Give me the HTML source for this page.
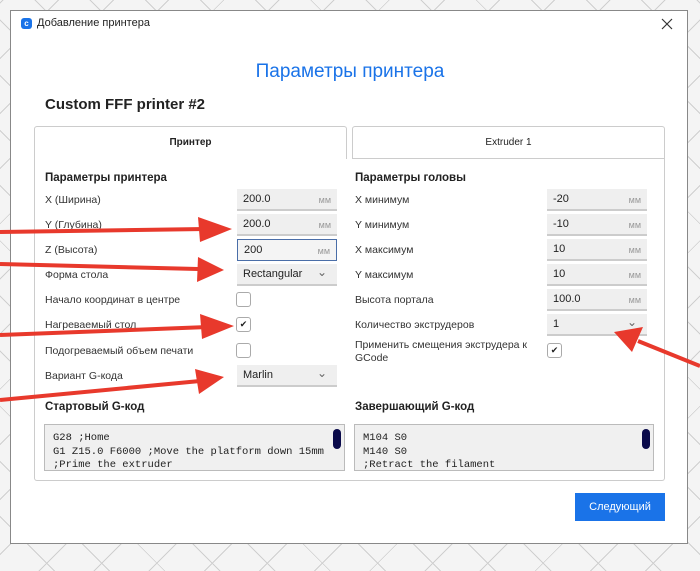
<!DOCTYPE html>
<html><head><meta charset="utf-8"><style>
*{box-sizing:border-box;margin:0;padding:0}
body{width:700px;height:571px;overflow:hidden;position:relative;font-family:"Liberation Sans","DejaVu Sans",sans-serif;font-size:10.5px;color:#222;
background-color:#f4f4f4;
background-image:repeating-linear-gradient(45deg,transparent 0 38px,#cfcfcf 38px 39px),repeating-linear-gradient(-45deg,transparent 0 38px,#cfcfcf 38px 39px);}
.dlg{position:absolute;left:10px;top:10px;width:678px;height:534px;background:#fff;border:1px solid #888;}
.abs{position:absolute}
.lbl{position:absolute;font-size:10.5px;color:#333}
.inp{position:absolute;width:100px;height:22px;background:#efefef;border-bottom:2px solid #ccc;font-size:11px;padding:4px 0 0 6px;color:#222}
.inp .u{position:absolute;right:6px;top:6px;font-size:9px;color:#999}
.inp .c{position:absolute;right:10px;top:1px;font-size:12px;color:#666}
.cb{position:absolute;width:15px;height:15px;border:1px solid #aaa;border-radius:3px;background:#fff;font-size:9px;text-align:center;line-height:13px}
.h{position:absolute;font-weight:bold;font-size:11.5px;color:#222}
.code{position:absolute;height:47px;background:#f0f0f0;border:1px solid #bbb;font-family:"Liberation Mono",monospace;font-size:10.5px;line-height:13.5px;padding:7px 0 0 8px;overflow:hidden;white-space:pre;color:#222}
.sb{position:absolute;right:3px;top:4px;width:8px;height:20px;border-radius:4px;background:#0a0a4a}
</style></head><body>
<div class="dlg">
 <div class="abs" style="left:10px;top:7px;width:11px;height:11px;background:#1a73e8;border-radius:3px;color:#fff;font-size:8px;line-height:11px;text-align:center;font-weight:bold">c</div>
 <div class="abs" style="left:26px;top:6px;font-size:11px;color:#222">Добавление принтера</div>
 <svg class="abs" style="left:650px;top:7px" width="12" height="12"><path d="M1 1L11 11M11 1L1 11" stroke="#333" stroke-width="1.2"/></svg>
</div>
<div class="abs" style="left:0;top:61px;width:700px;text-align:center;font-size:19px;color:#1a73e8">Параметры принтера</div>
<div class="abs" style="left:45px;top:96px;font-size:15px;font-weight:bold;color:#222">Custom FFF printer #2</div>
<div class="abs" style="left:34px;top:158px;width:631px;height:323px;border:1px solid #ccc;border-top:none;border-radius:0 0 3px 3px"></div>
<div class="abs" style="left:352px;top:158px;width:313px;height:1px;background:#ccc"></div>
<div class="abs" style="left:34px;top:126px;width:313px;height:33px;border:1px solid #ccc;border-bottom:none;border-radius:3px 3px 0 0;background:#fff;text-align:center;line-height:32px;font-size:10px;font-weight:bold">Принтер</div>
<div class="abs" style="left:352px;top:126px;width:313px;height:32px;border:1px solid #ccc;border-bottom:none;border-radius:3px 3px 0 0;background:#fff;text-align:center;line-height:32px;font-size:10px">Extruder 1</div>

<div class="h" style="left:45px;top:172px">Параметры принтера</div>
<div class="lbl" style="left:45px;top:194px">X (Ширина)</div><div class="inp" style="left:237px;top:189px">200.0<span class="u">мм</span></div>
<div class="lbl" style="left:45px;top:219px">Y (Глубина)</div><div class="inp" style="left:237px;top:214px">200.0<span class="u">мм</span></div>
<div class="lbl" style="left:45px;top:244px">Z (Высота)</div><div class="inp" style="left:237px;top:239px;border:1px solid #4a6ea8;background:#f4f4f4">200<span class="u">мм</span></div>
<div class="lbl" style="left:45px;top:269px">Форма стола</div><div class="inp" style="left:237px;top:264px">Rectangular<span class="c">⌄</span></div>
<div class="lbl" style="left:45px;top:294px">Начало координат в центре</div><div class="cb" style="left:236px;top:292px"></div>
<div class="lbl" style="left:45px;top:319px">Нагреваемый стол</div><div class="cb" style="left:236px;top:317px">✔</div>
<div class="lbl" style="left:45px;top:345px">Подогреваемый объем печати</div><div class="cb" style="left:236px;top:343px"></div>
<div class="lbl" style="left:45px;top:370px">Вариант G-кода</div><div class="inp" style="left:237px;top:365px">Marlin<span class="c">⌄</span></div>

<div class="h" style="left:355px;top:172px">Параметры головы</div>
<div class="lbl" style="left:355px;top:194px">X минимум</div><div class="inp" style="left:547px;top:189px">-20<span class="u">мм</span></div>
<div class="lbl" style="left:355px;top:219px">Y минимум</div><div class="inp" style="left:547px;top:214px">-10<span class="u">мм</span></div>
<div class="lbl" style="left:355px;top:244px">X максимум</div><div class="inp" style="left:547px;top:239px">10<span class="u">мм</span></div>
<div class="lbl" style="left:355px;top:269px">Y максимум</div><div class="inp" style="left:547px;top:264px">10<span class="u">мм</span></div>
<div class="lbl" style="left:355px;top:294px">Высота портала</div><div class="inp" style="left:547px;top:289px">100.0<span class="u">мм</span></div>
<div class="lbl" style="left:355px;top:319px">Количество экструдеров</div><div class="inp" style="left:547px;top:314px">1<span class="c">⌄</span></div>
<div class="lbl" style="left:355px;top:339px;line-height:13px">Применить смещения экструдера к<br>GCode</div><div class="cb" style="left:547px;top:343px">✔</div>

<div class="h" style="left:45px;top:401px">Стартовый G-код</div>
<div class="code" style="left:44px;top:424px;width:301px">G28 ;Home
G1 Z15.0 F6000 ;Move the platform down 15mm
;Prime the extruder<div class="sb"></div></div>
<div class="h" style="left:355px;top:401px">Завершающий G-код</div>
<div class="code" style="left:354px;top:424px;width:300px">M104 S0
M140 S0
;Retract the filament<div class="sb"></div></div>

<div class="abs" style="left:575px;top:493px;width:90px;height:28px;background:#1a73e8;color:#fff;font-size:11px;text-align:center;line-height:28px">Следующий</div>

<svg class="abs" style="left:0;top:0" width="700" height="571">
<g stroke="#e8392c" stroke-width="4" fill="#e8392c">
<line x1="0" y1="232" x2="205" y2="229"/><polygon stroke="none" points="232,229 198,217 200,242"/>
<line x1="0" y1="264" x2="198" y2="269"/><polygon stroke="none" points="224,270 198,257 197,282"/>
<line x1="0" y1="335" x2="208" y2="327"/><polygon stroke="none" points="234,326 200,314 202,339"/>
<line x1="0" y1="400" x2="200" y2="381"/><polygon stroke="none" points="224,377 195,369 199,394"/>
<line x1="700" y1="366" x2="638" y2="341"/><polygon stroke="none" points="614,332 643,327 632,352"/>
</g></svg>
</body></html>
